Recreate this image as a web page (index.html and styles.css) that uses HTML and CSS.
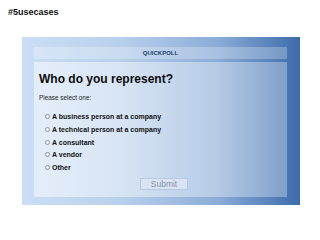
FILE: index.html
```html
<!DOCTYPE html>
<html>
<head>
<meta charset="utf-8">
<link rel="stylesheet" href="styles.css">
</head>
<body>
<div class="tag">#5usecases</div>
<div class="poll">
  <div class="poll-head">QUICKPOLL</div>
  <div class="poll-body">
    <h1 class="question">Who do you represent?</h1>
    <p class="hint">Please select one:</p>
    <ul class="options">
      <li class="option"><span class="radio"></span>A business person at a company</li>
      <li class="option"><span class="radio"></span>A technical person at a company</li>
      <li class="option"><span class="radio"></span>A consultant</li>
      <li class="option"><span class="radio"></span>A vendor</li>
      <li class="option"><span class="radio"></span>Other</li>
    </ul>
    <div class="submit">Submit</div>
  </div>
</div>
</body>
</html>
```
FILE: styles.css
```css
html, body {
  margin: 0;
  padding: 0;
  background: #ffffff;
  font-family: "Liberation Sans", Arial, sans-serif;
}
.tag {
  padding: 7px 0 0 8px;
  font-size: 9px;
  line-height: 11px;
  font-weight: bold;
  color: #111;
}
.poll {
  margin: 19px 0 0 22px;
  width: 278px;
  box-sizing: border-box;
  padding: 10px 13px 8px 12px;
  background: linear-gradient(to right, #cbdef5 0%, #b9d0ec 35%, #8cadd8 70%, #3c6cab 100%);
}
.poll-head {
  height: 12px;
  line-height: 12px;
  text-align: center;
  font-size: 6px;
  font-weight: bold;
  color: #253f6b;
  background: rgba(255, 255, 255, 0.25);
}
.poll-body {
  margin-top: 3px;
  height: 135px;
  box-sizing: border-box;
  padding: 10px 0 0 5px;
  background: linear-gradient(to right, rgba(255,255,255,0.5), rgba(255,255,255,0.3));
}
.question {
  margin: 0;
  font-size: 12px;
  line-height: 14px;
  font-weight: bold;
  color: #0c0c0c;
}
.hint {
  margin: 7.5px 0 0 0;
  font-size: 6.4px;
  line-height: 8px;
  color: #222;
}
.options {
  list-style: none;
  margin: 8.8px 0 0 0;
  padding: 0 0 0 6px;
}
.option {
  display: flex;
  align-items: center;
  height: 12.75px;
  font-size: 7px;
  font-weight: bold;
  color: #111;
}
.radio {
  width: 3px;
  height: 3px;
  border: 0.8px solid #8a94a2;
  border-radius: 50%;
  background: #f2f5f9;
  margin-right: 2px;
}
.submit {
  margin: 4px 0 0 101px;
  width: 48px;
  height: 12px;
  box-sizing: border-box;
  border: 1px solid #b7c9e0;
  background: #d8e4f3;
  color: #8593a8;
  font-size: 8.5px;
  line-height: 10px;
  text-align: center;
}
```
